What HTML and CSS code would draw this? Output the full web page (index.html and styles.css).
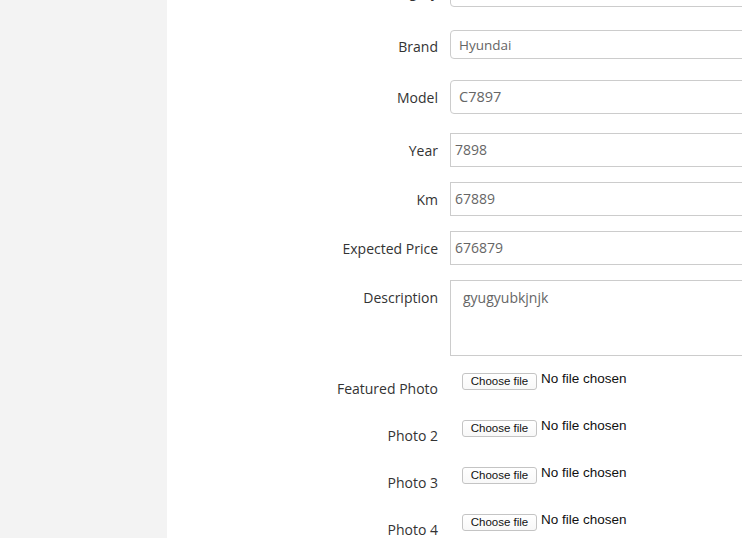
FILE: index.html
```html
<!DOCTYPE html>
<html>
<head>
<meta charset="utf-8">
<link rel="stylesheet" href="styles.css">
</head>
<body>
<div class="layout">
  <aside class="sidebar"></aside>
  <main class="content">
    <form class="form">
      <div class="row row-sub">
        <label class="label">Sub-category</label>
        <div class="field"><div class="input rounded">Select Sub-category</div></div>
      </div>
      <div class="row row-brand">
        <label class="label">Brand</label>
        <div class="field"><div class="input rounded short pad8">Hyundai</div></div>
      </div>
      <div class="row row-model">
        <label class="label">Model</label>
        <div class="field"><div class="input rounded pad8 big">C7897</div></div>
      </div>
      <div class="row row-year">
        <label class="label">Year</label>
        <div class="field"><div class="input">7898</div></div>
      </div>
      <div class="row">
        <label class="label">Km</label>
        <div class="field"><div class="input">67889</div></div>
      </div>
      <div class="row">
        <label class="label">Expected Price</label>
        <div class="field"><div class="input">676879</div></div>
      </div>
      <div class="row row-desc">
        <label class="label">Description</label>
        <div class="field"><div class="input textarea">gyugyubkjnjk</div></div>
      </div>
      <div class="row file-row">
        <label class="label">Featured Photo</label>
        <div class="field file-field"><button type="button" class="file-btn">Choose file</button><span class="file-name">No file chosen</span></div>
      </div>
      <div class="row file-row">
        <label class="label">Photo 2</label>
        <div class="field file-field"><button type="button" class="file-btn">Choose file</button><span class="file-name">No file chosen</span></div>
      </div>
      <div class="row file-row">
        <label class="label">Photo 3</label>
        <div class="field file-field"><button type="button" class="file-btn">Choose file</button><span class="file-name">No file chosen</span></div>
      </div>
      <div class="row file-row">
        <label class="label">Photo 4</label>
        <div class="field file-field"><button type="button" class="file-btn">Choose file</button><span class="file-name">No file chosen</span></div>
      </div>
    </form>
  </main>
</div>
</body>
</html>
```
FILE: styles.css
```css
html, body {
  margin: 0;
  padding: 0;
  height: 100%;
  overflow: hidden;
  background: #ffffff;
  font-family: "Open Sans", "Liberation Sans", sans-serif;
  font-size: 14px;
  color: #333333;
}

.layout {
  display: flex;
  height: 538px;
  width: 742px;
  overflow: hidden;
}

.sidebar {
  width: 167px;
  flex: 0 0 167px;
  background: #f3f3f3;
}

.content {
  flex: 1;
  overflow: hidden;
  padding-left: 15px;
}

.form {
  display: flex;
  flex-direction: column;
  margin-top: -27px;
}

.row {
  display: flex;
  align-items: flex-start;
  gap: 12px;
  margin-bottom: 15px;
}

.row-sub { margin-bottom: 23px; }
.row-brand { margin-bottom: 21px; }
.row-model { margin-bottom: 19px; }
.row-desc { margin-bottom: 17px; }

.label {
  width: 256px;
  flex: 0 0 256px;
  text-align: right;
  padding-top: 8px;
  line-height: 20px;
  font-size: 14px;
  color: #333333;
}

.row-sub .label { padding-top: 9px; }
.row-brand .label { padding-top: 7px; }

.field {
  width: 400px;
  flex: 0 0 400px;
}

.input {
  box-sizing: border-box;
  height: 34px;
  border: 1px solid #cccccc;
  background: #ffffff;
  padding: 6px 4px;
  line-height: 20px;
  font-size: 14px;
  color: #666666;
  white-space: nowrap;
}

.input.rounded { border-radius: 4px; }
.input.pad8 { padding-left: 8px; padding-right: 8px; }
.input.short { height: 29px; padding-top: 4px; padding-bottom: 4px; font-size: 13.5px; }
.input.big { font-size: 14.5px; }

.input.textarea {
  height: 76px;
  padding: 7px 12px;
}

.file-row {
  height: 32px;
}

.file-row .label {
  padding-top: 6px;
}

.file-field {
  display: flex;
  align-items: flex-start;
  padding-left: 12px;
  gap: 4px;
}

.file-btn {
  box-sizing: border-box;
  height: 17px;
  width: 75px;
  padding: 0;
  margin: 0;
  border: 1px solid #c4c4c4;
  border-radius: 3px;
  background: linear-gradient(#ffffff, #f8f8f8);
  font-family: "Liberation Sans", Arial, sans-serif;
  font-size: 11.5px;
  line-height: 15px;
  color: #111111;
}

.file-name {
  font-family: "Liberation Sans", Arial, sans-serif;
  font-size: 13.5px;
  line-height: 14px;
  color: #111111;
  margin-top: -1px;
}
```
